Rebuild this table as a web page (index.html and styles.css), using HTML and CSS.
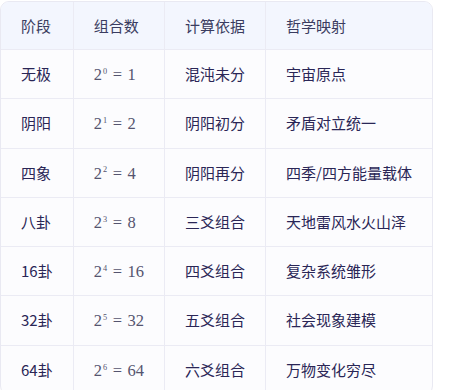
FILE: index.html
```html
<!DOCTYPE html>
<html lang="zh">
<head>
<meta charset="utf-8">
<link rel="stylesheet" href="styles.css">
</head>
<body>
<div class="frame">
<table class="grid">
<thead>
<tr><th>阶段</th><th>组合数</th><th>计算依据</th><th>哲学映射</th></tr>
</thead>
<tbody>
<tr><td>无极</td><td><span class="m">2<sup>0</sup><span class="eq">=</span>1</span></td><td>混沌未分</td><td>宇宙原点</td></tr>
<tr><td>阴阳</td><td><span class="m">2<sup>1</sup><span class="eq">=</span>2</span></td><td>阴阳初分</td><td>矛盾对立统一</td></tr>
<tr><td>四象</td><td><span class="m">2<sup>2</sup><span class="eq">=</span>4</span></td><td>阴阳再分</td><td>四季/四方能量载体</td></tr>
<tr><td>八卦</td><td><span class="m">2<sup>3</sup><span class="eq">=</span>8</span></td><td>三爻组合</td><td>天地雷风水火山泽</td></tr>
<tr><td>16卦</td><td><span class="m">2<sup>4</sup><span class="eq">=</span>16</span></td><td>四爻组合</td><td>复杂系统雏形</td></tr>
<tr><td>32卦</td><td><span class="m">2<sup>5</sup><span class="eq">=</span>32</span></td><td>五爻组合</td><td>社会现象建模</td></tr>
<tr><td>64卦</td><td><span class="m">2<sup>6</sup><span class="eq">=</span>64</span></td><td>六爻组合</td><td>万物变化穷尽</td></tr>
</tbody>
</table>
</div>
</body>
</html>
```

FILE: styles.css
```css
html, body {
  margin: 0;
  padding: 0;
  background: #ffffff;
}
body {
  font-family: "Noto Sans CJK SC", "Noto Sans", sans-serif;
  font-size: 15px;
  color: #2a2656;
}
.frame {
  margin-top: 1px;
  width: fit-content;
  border: 1px solid #e9e9f2;
  border-radius: 9px;
  overflow: hidden;
  background: #fcfcfe;
}
.grid {
  border-collapse: collapse;
}
.grid th, .grid td {
  padding: 12px 20px;
  line-height: 24.3px;
  text-align: left;
  white-space: nowrap;
  border-left: 1px solid #ebebf4;
  border-top: 1px solid #ebebf4;
  font-weight: 400;
}
.grid th:first-child, .grid td:first-child {
  border-left: none;
}
.grid thead th {
  border-top: none;
  line-height: 23px;
  background: #f3f6fe;
  color: #3a3c60;
}
.m {
  font-family: "Liberation Serif", "DejaVu Serif", serif;
  font-size: 16.5px;
  line-height: 1;
  color: #55546f;
}
.m sup {
  font-size: 0.5em;
  vertical-align: 0.75em;
  line-height: 0;
  margin-left: 1px;
}
.eq {
  margin: 0 0.34em;
}
```
